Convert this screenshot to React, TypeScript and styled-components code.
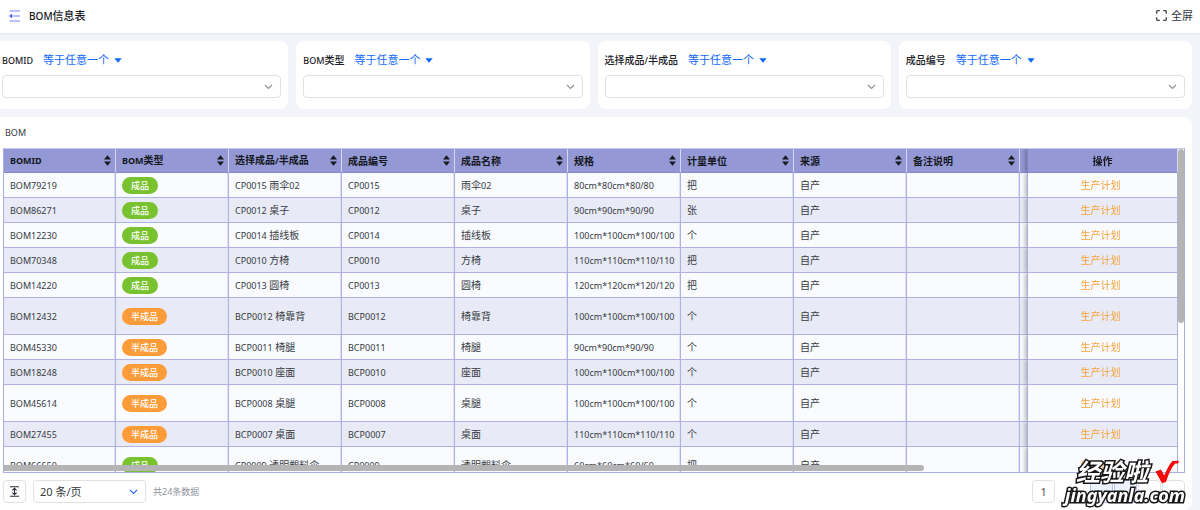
import React from "react";
import styled, { createGlobalStyle, css } from "styled-components";

const GlobalStyle = createGlobalStyle`
  *, *::before, *::after { box-sizing: border-box; }
  body {
    margin: 0;
    overflow: hidden;
    background: #f3f4f9;
    color: #363a42;
    font-family: "Noto Sans", "Noto Sans CJK SC", sans-serif;
    font-size: 10px;
    line-height: 16px;
  }
  button, select { font: inherit; color: inherit; }
  button { padding: 0; border: 0; background: none; cursor: pointer; }
`;

const Page = styled.div`
  display: flex;
  flex-direction: column;
  height: 100vh;
  position: relative;
`;

const TopBar = styled.header`
  display: flex;
  align-items: center;
  gap: 8px;
  flex: none;
  height: 33px;
  padding: 0 7px 2px 8px;
  background: #fff;
  box-shadow: 0 1px 2px #e4e5ec;
`;

const IconButton = styled.button`
  display: flex;
  align-items: center;
  gap: 4px;
  font-size: 11px;
`;

const PageTitle = styled.h1`
  margin: 0;
  flex: 1;
  font-size: 11px;
  font-weight: 500;
  color: #14171c;
`;

const Filters = styled.section`
  display: grid;
  grid-template-columns: repeat(4, 1fr);
  gap: 8px;
  flex: none;
  margin: 8px 8px 8px -5px;
`;

const FilterCard = styled.div`
  display: flex;
  flex-direction: column;
  gap: 6px;
  padding: 10px 7px 11px;
  border-radius: 8px;
  background: #fff;
`;

const FilterHead = styled.div`
  display: flex;
  align-items: center;
  gap: 10px;
  height: 18px;
`;

const FilterLabel = styled.label`
  font-weight: 500;
  color: #1c2027;
`;

const Operator = styled.button`
  display: flex;
  align-items: center;
  gap: 5px;
  font-size: 11px;
  color: #1168fa;
`;

const SelectBox = styled.div<{ $width?: number }>`
  display: flex;
  align-items: center;
  position: relative;
  height: 23px;
  ${(p) => p.$width && css`width: ${p.$width}px;`}

  select {
    appearance: none;
    width: 100%;
    height: 100%;
    padding: 0 6px;
    border: 1px solid #dfe1e5;
    border-radius: 4px;
    background: #fff;
    font-size: 11px;
  }
  svg {
    position: absolute;
    right: 8px;
    pointer-events: none;
  }
`;

const Panel = styled.main`
  display: flex;
  flex-direction: column;
  flex: 1;
  min-height: 0;
  margin-right: 8px;
  padding: 0 7px 0 3px;
  border-radius: 0 8px 8px 0;
  background: #fff;
`;

const PanelTitle = styled.h2`
  margin: 0;
  padding-left: 2px;
  flex: none;
  font-size: 10px;
  font-weight: 400;
  line-height: 31px;
`;

const TableFrame = styled.div`
  position: relative;
  flex: 1;
  min-height: 0;
  padding-right: 6px;
  border: 1px solid #a9aee0;
  border-top-color: #c5c9ee;
`;

const TableScroll = styled.div`
  height: 100%;
  overflow: auto;
  scrollbar-width: none;
`;

const Table = styled.table`
  width: 1510px;
  min-width: 100%;
  table-layout: fixed;
  border-collapse: separate;
  border-spacing: 0;
`;

const Row = styled.tr<{ $tall?: boolean }>`
  height: ${(p) => (p.$tall ? 37 : 25)}px;
  background: #f9fbff;
  &:nth-child(even) { background: #e8eaf6; }
`;

const pinned = css`
  position: sticky;
  right: 0;
  padding: 0 4px 0 0;
  text-align: center;
  box-shadow: -2px 0 4px #00000040;
  clip-path: inset(0 0 0 -8px);
`;

const Cell = styled.td<{ $pinned?: boolean }>`
  padding: 0 6px;
  border-right: 1px solid #adb2e2;
  border-bottom: 1px solid #adb2e2;
  box-shadow: inset -1px 0 #dfe2f5;
  white-space: nowrap;
  ${(p) =>
    p.$pinned &&
    css`
      ${pinned}
      border-left: 1px solid #a9aee0;
      background: inherit;
    `}
`;

const HeadCell = styled.th<{ $pinned?: boolean }>`
  position: sticky;
  top: 0;
  z-index: 1;
  height: 24px;
  padding: 0 4px 0 6px;
  border-right: 1px solid #d5d8f3;
  border-bottom: 1px solid #858acb;
  background: #9499d6;
  color: #15171c;
  font-weight: 700;
  text-align: left;
  white-space: nowrap;
  ${(p) =>
    p.$pinned &&
    css`
      ${pinned}
      padding: 0;
      z-index: 2;
      border-left: 1px solid #8085bd;
    `}
`;

const HeadContent = styled.div`
  display: flex;
  align-items: center;
  justify-content: space-between;
`;

const Latin = styled.span<{ $size: number }>`
  font-size: ${(p) => p.$size}px;
`;

const Tag = styled.span<{ $semi: boolean }>`
  display: inline-block;
  padding: 0 9px;
  border-radius: 9px;
  background: ${(p) => (p.$semi ? "#ff9c3a" : "#79c22f")};
  color: #fff;
  font-size: 9px;
  font-weight: 500;
  line-height: 17px;
  vertical-align: middle;
`;

const PlanLink = styled.a`
  color: #f7a135;
  text-decoration: none;
`;

const VerticalThumb = styled.div`
  position: absolute;
  top: 0;
  right: 0;
  z-index: 3;
  width: 6px;
  height: 54%;
  border-radius: 3px;
  background: #b4b4b4;
`;

const HorizontalThumb = styled.div`
  position: absolute;
  left: 0;
  bottom: 1px;
  z-index: 3;
  width: 78%;
  height: 6px;
  border-radius: 0 3px 3px 0;
  background: #b4b4b4;
`;

const Footer = styled.footer`
  display: flex;
  align-items: center;
  gap: 7px;
  flex: none;
  height: 37px;
`;

const SquareButton = styled.button<{ $active?: boolean }>`
  display: flex;
  align-items: center;
  justify-content: center;
  width: 23px;
  height: 23px;
  border: 1px solid ${(p) => (p.$active ? "#b9c3f5" : "#dfe1e5")};
  border-radius: 4px;
  background: ${(p) => (p.$active ? "#eef1ff" : "#fff")};
`;

const Total = styled.span`
  flex: 1;
  font-size: 9px;
  color: #8f949c;
`;

const Pager = styled.nav`
  display: flex;
  gap: 1px;

  button:first-child { margin-right: 34px; }
`;

const Watermark = styled.div`
  position: absolute;
  right: 15px;
  bottom: 5px;
  z-index: 5;
  display: flex;
  flex-direction: column;
  align-items: flex-end;
  color: #fff;
  font-weight: 700;
  font-style: italic;
  -webkit-text-stroke: 3px #161616;
  paint-order: stroke fill;
  pointer-events: none;
`;

const WatermarkName = styled.div`
  display: flex;
  align-items: center;
  gap: 7px;
  padding-right: 6px;
  font-size: 24px;
  line-height: 26px;
`;

const WatermarkSite = styled.div`
  font-size: 18px;
  line-height: 20px;
`;

function Mixed({ text, latin = 9 }: { text: string; latin?: number }) {
  const runs = text.split(/([A-Za-z0-9*/]+)/).filter(Boolean);
  return (
    <>
      {runs.map((run, i) =>
        /^[A-Za-z0-9*/]/.test(run) ? <Latin key={i} $size={latin}>{run}</Latin> : run
      )}
    </>
  );
}

function Chevron({ color = "#8d9199" }: { color?: string }) {
  return (
    <svg width="9" height="6" viewBox="0 0 9 6" fill="none" stroke={color} strokeWidth="1.2">
      <path d="M1 1l3.5 3.5L8 1" />
    </svg>
  );
}

function SortIcon() {
  return (
    <svg width="7" height="11" viewBox="0 0 7 11" fill="#17191d">
      <path d="M3.5 .2L7 4.500H0zM3.5 10.800L0 6.500h7z" />
    </svg>
  );
}

const filters = ["BOMID", "BOM类型", "选择成品/半成品", "成品编号"];
const columns = ["BOMID", "BOM类型", "选择成品/半成品", "成品编号", "成品名称", "规格", "计量单位", "来源", "备注说明"];

type Item = { id: string; code: string; name: string; spec: string; unit: string; tall?: boolean };

const items: Item[] = [
  { id: "BOM79219", code: "CP0015", name: "雨伞02", spec: "80cm*80cm*80/80", unit: "把" },
  { id: "BOM86271", code: "CP0012", name: "桌子", spec: "90cm*90cm*90/90", unit: "张" },
  { id: "BOM12230", code: "CP0014", name: "插线板", spec: "100cm*100cm*100/100", unit: "个" },
  { id: "BOM70348", code: "CP0010", name: "方椅", spec: "110cm*110cm*110/110", unit: "把" },
  { id: "BOM14220", code: "CP0013", name: "圆椅", spec: "120cm*120cm*120/120", unit: "把" },
  { id: "BOM12432", code: "BCP0012", name: "椅靠背", spec: "100cm*100cm*100/100", unit: "个", tall: true },
  { id: "BOM45330", code: "BCP0011", name: "椅腿", spec: "90cm*90cm*90/90", unit: "个" },
  { id: "BOM18248", code: "BCP0010", name: "座面", spec: "100cm*100cm*100/100", unit: "个" },
  { id: "BOM45614", code: "BCP0008", name: "桌腿", spec: "100cm*100cm*100/100", unit: "个", tall: true },
  { id: "BOM27455", code: "BCP0007", name: "桌面", spec: "110cm*110cm*110/110", unit: "个" },
  { id: "BOM66650", code: "CP0009", name: "透明塑料伞", spec: "60cm*60cm*60/60", unit: "把", tall: true },
];

export default function App() {
  return (
    <>
      <GlobalStyle />
      <Page>
        <TopBar>
          <IconButton aria-label="menu">
            <svg width="13" height="12" viewBox="0 0 13 12" fill="none" stroke="#7b83fb" strokeWidth="1.2">
              <path d="M1.5 1h10.5M4 6h8M1.5 11h10.5" />
              <path d="M1 6l3-2.2v4.4z" fill="#4d57ee" stroke="none" />
            </svg>
          </IconButton>
          <PageTitle><Mixed text="BOM信息表" latin={10} /></PageTitle>
          <IconButton>
            <svg width="11" height="11" viewBox="0 0 11 11" fill="none" stroke="#3a3e45" strokeWidth="1.3">
              <path d="M.7 3.8V1.7a1 1 0 0 1 1-1h2.1M7.2.7h2.1a1 1 0 0 1 1 1v2.1M10.3 7.2v2.1a1 1 0 0 1-1 1H7.2M3.8 10.3H1.7a1 1 0 0 1-1-1V7.2" />
            </svg>
            全屏
          </IconButton>
        </TopBar>

        <Filters>
          {filters.map((name, i) => (
            <FilterCard key={name}>
              <FilterHead>
                <FilterLabel htmlFor={`filter-${i}`}>
                  <Mixed text={name} />
                </FilterLabel>
                <Operator>
                  等于任意一个
                  <svg width="8" height="5" viewBox="0 0 8 5" fill="#1168fa">
                    <path d="M.3.2h7.4L4 4.8z" />
                  </svg>
                </Operator>
              </FilterHead>
              <SelectBox>
                <select id={`filter-${i}`} />
                <Chevron />
              </SelectBox>
            </FilterCard>
          ))}
        </Filters>

        <Panel>
          <PanelTitle><Mixed text="BOM" /></PanelTitle>
          <TableFrame>
            <TableScroll>
              <Table>
                <colgroup>
                  <col style={{ width: 112 }} />
                  {columns.slice(1).map((name) => (
                    <col key={name} style={{ width: 113 }} />
                  ))}
                  <col />
                  <col style={{ width: 151 }} />
                </colgroup>
                <thead>
                  <tr>
                    {columns.map((name) => (
                      <HeadCell key={name}>
                        <HeadContent>
                          <span><Mixed text={name} /></span>
                          <SortIcon />
                        </HeadContent>
                      </HeadCell>
                    ))}
                    <HeadCell />
                    <HeadCell $pinned>操作</HeadCell>
                  </tr>
                </thead>
                <tbody>
                  {items.map((item) => {
                    const semi = item.code.startsWith("B");
                    return (
                      <Row key={item.id} $tall={item.tall}>
                        <Cell><Mixed text={item.id} /></Cell>
                        <Cell><Tag $semi={semi}>{semi ? "半成品" : "成品"}</Tag></Cell>
                        <Cell><Mixed text={`${item.code} ${item.name}`} /></Cell>
                        <Cell><Mixed text={item.code} /></Cell>
                        <Cell><Mixed text={item.name} /></Cell>
                        <Cell><Mixed text={item.spec} /></Cell>
                        <Cell>{item.unit}</Cell>
                        <Cell>自产</Cell>
                        <Cell />
                        <Cell />
                        <Cell $pinned><PlanLink href="#plan">生产计划</PlanLink></Cell>
                      </Row>
                    );
                  })}
                </tbody>
              </Table>
            </TableScroll>
            <VerticalThumb />
            <HorizontalThumb />
          </TableFrame>
          <Footer>
            <SquareButton aria-label="row height">
              <svg width="11" height="11" viewBox="0 0 11 11" fill="none" stroke="#2b2f36" strokeWidth="1.1">
                <path d="M1 .8h9M1 10.2h9M5.5 2.5v6M3.4 4.3l2.1-2 2.1 2M3.4 6.7l2.1 2 2.1-2" />
              </svg>
            </SquareButton>
            <SelectBox $width={113}>
              <select aria-label="page size">
                <option>20 条/页</option>
              </select>
              <Chevron color="#2f6df6" />
            </SelectBox>
            <Total>共24条数据</Total>
            <Pager>
              <SquareButton>1</SquareButton>
              <SquareButton $active aria-label="previous" />
              <SquareButton $active aria-label="current" />
              <SquareButton aria-label="next" />
              <SquareButton aria-label="last" />
            </Pager>
          </Footer>
        </Panel>

        <Watermark>
          <WatermarkName>
            经验啦
            <svg width="24" height="24" viewBox="0 0 24 24" fill="#f5090b">
              <path d="M.5 11.500L6 9.500l3.200 6C12 9 14.500 4 17.500 1L24 .8l-.8 2.600h-3C16 8 13 15 11 22l-4 1.200z" />
            </svg>
          </WatermarkName>
          <WatermarkSite>jingyanla.com</WatermarkSite>
        </Watermark>
      </Page>
    </>
  );
}
